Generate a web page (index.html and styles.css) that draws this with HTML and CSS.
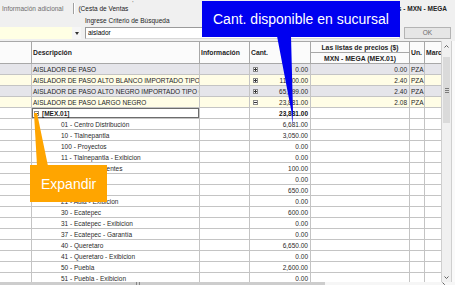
FILE: index.html
```html
<!DOCTYPE html>
<html lang="es">
<head>
<meta charset="utf-8">
<title>Cesta de Ventas</title>
<link rel="stylesheet" href="styles.css">
</head>
<body>
<div class="app">
  <div class="tabs">
    <span class="tab tab-off">Información adicional</span>
    <span class="tab-sep"></span>
    <span class="tab tab-on">(Cesta de Ventas</span>
    <span class="tick">'</span>
    <span class="pricelist">Lista de precios - MXN - MEGA</span>
  </div>
  <div class="search">
    <div class="combo">
      <span class="combo-val"></span>
      <span class="combo-btn"><svg width="4" height="3" viewBox="0 0 4 3"><path d="M0 0h4L2 3z" fill="#333"/></svg></span>
    </div>
    <div class="field">
      <div class="field-label">Ingrese Criterio de Búsqueda</div>
      <div class="field-row">
        <div class="input">aislador</div>
        <div class="btn">OK</div>
      </div>
    </div>
  </div>
  <div class="gridwrap">
    <div class="grid">
      <div class="ghead">
        <div class="h h-c0"></div>
        <div class="h h-desc">Descripción</div>
        <div class="h h-info">Información</div>
        <div class="h h-cant">Cant.</div>
        <div class="h h-pl1">Las listas de precios ($)</div>
        <div class="h h-pl2">MXN - MEGA (MEX.01)</div>
        <div class="h h-un">Un.</div>
        <div class="h h-marc">Marc</div>
      </div>

      <div class="row gray">
        <div></div><div class="desc">AISLADOR DE PASO</div><div></div>
        <div class="cant"><svg class="exp" width="5" height="5" viewBox="0 0 5 5"><rect x="0.5" y="0.5" width="4" height="4" fill="#fff" stroke="#8a8a8a"/><path d="M1 2.5h3M2.5 1v3" stroke="#333"/></svg><span>0.00</span></div>
        <div class="num">0.00</div><div class="un">PZA</div><div class="marc"></div>
      </div>
      <div class="row yel">
        <div></div><div class="desc">AISLADOR DE PASO ALTO BLANCO IMPORTADO TIPO CAMPANA</div><div></div>
        <div class="cant"><svg class="exp" width="5" height="5" viewBox="0 0 5 5"><rect x="0.5" y="0.5" width="4" height="4" fill="#fff" stroke="#8a8a8a"/><path d="M1 2.5h3M2.5 1v3" stroke="#333"/></svg><span>11,400.00</span></div>
        <div class="num">2.40</div><div class="un">PZA</div><div class="marc"></div>
      </div>
      <div class="row gray">
        <div></div><div class="desc">AISLADOR DE PASO ALTO NEGRO IMPORTADO TIPO CAMPANA</div><div></div>
        <div class="cant"><svg class="exp" width="5" height="5" viewBox="0 0 5 5"><rect x="0.5" y="0.5" width="4" height="4" fill="#fff" stroke="#8a8a8a"/><path d="M1 2.5h3M2.5 1v3" stroke="#333"/></svg><span>65,799.00</span></div>
        <div class="num">2.40</div><div class="un">PZA</div><div class="marc"></div>
      </div>
      <div class="row yel">
        <div></div><div class="desc">AISLADOR DE PASO LARGO NEGRO</div><div></div>
        <div class="cant"><svg class="exp" width="5" height="5" viewBox="0 0 5 5"><rect x="0.5" y="0.5" width="4" height="4" fill="#fff" stroke="#8a8a8a"/><path d="M1 2.5h3" stroke="#333"/></svg><span>23,881.00</span></div>
        <div class="num">2.08</div><div class="un">PZA</div><div class="marc"></div>
      </div>
      <div class="row group">
        <div></div>
        <div class="desc focus"><svg class="exp" width="5" height="5" viewBox="0 0 5 5"><rect x="0.5" y="0.5" width="4" height="4" fill="#fff" stroke="#8a8a8a"/><path d="M1 2.5h3" stroke="#333"/></svg><b>[MEX.01]</b></div>
        <div></div><div class="num bold">23,881.00</div><div></div><div></div><div class="marc"></div>
      </div>
      <div class="row child"><div></div><div class="desc">01 - Centro Distribución</div><div></div><div class="num">6,681.00</div><div></div><div></div><div class="marc"></div></div>
      <div class="row child"><div></div><div class="desc">10 - Tlalnepantla</div><div></div><div class="num">3,050.00</div><div></div><div></div><div class="marc"></div></div>
      <div class="row child"><div></div><div class="desc">100 - Proyectos</div><div></div><div class="num">0.00</div><div></div><div></div><div class="marc"></div></div>
      <div class="row child"><div></div><div class="desc">11 - Tlalnepantla - Exibicion</div><div></div><div class="num">0.00</div><div></div><div></div><div class="marc"></div></div>
      <div class="row child"><div></div><div class="desc">15 - Servicio Clientes</div><div></div><div class="num">100.00</div><div></div><div></div><div class="marc"></div></div>
      <div class="row child"><div></div><div class="desc">12 - Lerma</div><div></div><div class="num">0.00</div><div></div><div></div><div class="marc"></div></div>
      <div class="row child"><div></div><div class="desc">20 - Aula</div><div></div><div class="num">650.00</div><div></div><div></div><div class="marc"></div></div>
      <div class="row child"><div></div><div class="desc">21 - Aula - Exibicion</div><div></div><div class="num">0.00</div><div></div><div></div><div class="marc"></div></div>
      <div class="row child"><div></div><div class="desc">30 - Ecatepec</div><div></div><div class="num">600.00</div><div></div><div></div><div class="marc"></div></div>
      <div class="row child"><div></div><div class="desc">31 - Ecatepec - Exibicion</div><div></div><div class="num">0.00</div><div></div><div></div><div class="marc"></div></div>
      <div class="row child"><div></div><div class="desc">37 - Ecatepec - Garantía</div><div></div><div class="num">0.00</div><div></div><div></div><div class="marc"></div></div>
      <div class="row child"><div></div><div class="desc">40 - Queretaro</div><div></div><div class="num">6,650.00</div><div></div><div></div><div class="marc"></div></div>
      <div class="row child"><div></div><div class="desc">41 - Queretaro - Exibicion</div><div></div><div class="num">0.00</div><div></div><div></div><div class="marc"></div></div>
      <div class="row child"><div></div><div class="desc">50 - Puebla</div><div></div><div class="num">2,600.00</div><div></div><div></div><div class="marc"></div></div>
      <div class="row child"><div></div><div class="desc">51 - Puebla - Exibicion</div><div></div><div class="num">0.00</div><div></div><div></div><div class="marc"></div></div>
    </div>
    <div class="vscroll">
      <div class="sb-arrow"><svg width="5" height="3" viewBox="0 0 5 3"><path d="M0.5 2.5L2.5 0.5L4.5 2.5" fill="none" stroke="#606060"/></svg></div>
      <div class="sb-track">
        <div class="sb-thumb"><svg width="4" height="5" viewBox="0 0 4 5"><path d="M0 0.5h4M0 2.5h4M0 4.5h4" stroke="#7a7a7a"/></svg></div>
      </div>
      <div class="sb-arrow"><svg width="5" height="3" viewBox="0 0 5 3"><path d="M0.5 0.5L2.5 2.5L4.5 0.5" fill="none" stroke="#606060"/></svg></div>
    </div>
    <div class="edge"></div>
  </div>
  <div class="hscroll">
    <div class="hs-thumb"><span class="hs-grip"></span></div>
    <div class="hs-track"></div>
    <div class="hs-arrow"><svg width="3" height="5" viewBox="0 0 3 5"><path d="M0.5 0.5L2.5 2.5L0.5 4.5" fill="none" stroke="#606060"/></svg></div>
  </div>

  <div class="callout callout-blue">Cant. disponible en sucursal</div>
  <svg class="pointer" width="455" height="285" viewBox="0 0 455 285">
    <polygon points="277,36 291,36 293,112 292.3,125 291.5,112" fill="#0000f0"/>
    <polygon points="34,113 37,113 48,166 37,166" fill="#ffa500"/>
  </svg>
  <div class="callout callout-orange">Expandir</div>
</div>
</body>
</html>
```

FILE: styles.css
```css
* { box-sizing: border-box; margin: 0; padding: 0; }
html, body { width: 455px; height: 285px; overflow: hidden; }
body {
  font-family: "Liberation Sans", Arial, sans-serif;
  font-size: 6.5px;
  color: #1e1e1e;
  background: #f0f0f0;
}
.app { position: relative; width: 455px; height: 285px; overflow: hidden; }

/* tabs */
.tabs { height: 16px; display: flex; align-items: center; white-space: nowrap; }
.tab-off { margin-left: 2px; color: #6e6e6e; }
.tab-sep { width: 2px; height: 11px; margin-left: 10px; margin-right: 3px; border-left: 1px solid #a0a0a0; border-right: 1px solid #ffffff; }
.tab-on { color: #1a1a1a; }
.tick { align-self: flex-start; margin-left: 4px; margin-top: 0; color: #555; font-size: 6px; line-height: 6px; }
.pricelist { margin-left: auto; margin-right: 8px; font-weight: bold; color: #222; }

/* search */
.search { height: 25px; display: flex; align-items: flex-start; }
.combo { width: 81px; height: 12px; margin-top: 11px; display: flex; }
.combo-val { width: 72px; height: 12px; background: #ffffe4; }
.combo-btn { width: 9px; height: 12px; background: #f6f6f6; display: flex; align-items: center; justify-content: center; padding-left: 1px; }
.combo-btn svg { display: block; }
.field { margin-left: 4px; width: 366px; }
.field-label { height: 11px; padding-top: 1px; line-height: 8px; color: #1e1e1e; white-space: nowrap; }
.field-row { display: flex; height: 12px; }
.input { width: 315px; height: 12px; background: #fff; border: 1px solid #9a9a9a; border-right-color: #d8d8d8; border-bottom-color: #d8d8d8; padding-left: 2px; line-height: 10px; color: #000; }
.btn { width: 47px; height: 12px; margin-left: 4px; background: #e6e6e6; border: 1px solid #b4b4b4; text-align: center; line-height: 10px; color: #6a6a6a; }

/* grid */
.gridwrap { height: 241px; display: flex; background: #fff; }
.grid { width: 441px; height: 241px; overflow: hidden; background: #fff; }
.ghead {
  display: grid;
  grid-template-columns: 32px 168px 50px 61px 99px 15px 16px;
  grid-template-rows: 11px 11px;
  border-top: 1px solid #a8a8a8;
  background: #fbfbfb;
  font-size: 6.8px;
  font-weight: bold;
  color: #1e1e1e;
}
.h { border-right: 1px solid #a8a8a8; border-bottom: 1px solid #a8a8a8; display: flex; align-items: center; padding-left: 2px; white-space: nowrap; overflow: hidden; }
.h-c0 { grid-column: 1; grid-row: 1 / 3; }
.h-desc { grid-column: 2; grid-row: 1 / 3; padding-left: 1px; }
.h-info { grid-column: 3; grid-row: 1 / 3; padding-left: 1px; }
.h-cant { grid-column: 4; grid-row: 1 / 3; padding-left: 1px; }
.h-pl1 { grid-column: 5; grid-row: 1; justify-content: center; padding-left: 0; }
.h-pl2 { grid-column: 5; grid-row: 2; justify-content: center; padding-left: 0; }
.h-un { grid-column: 6; grid-row: 1 / 3; padding-left: 1px; }
.h-marc { grid-column: 7; grid-row: 1 / 3; border-right: none; padding-left: 1px; }

.row {
  display: grid;
  grid-template-columns: 32px 168px 50px 61px 99px 15px 16px;
  height: 11px;
}
.row > div {
  border-right: 1px solid #c4c4c4;
  border-bottom: 1px solid #c4c4c4;
  line-height: 11px;
  white-space: nowrap;
  overflow: hidden;
}
.row > .marc { border-right: none; }
.gray { background: #e5e5ea; }
.yel { background: #fffde6; }
.desc { padding-left: 1px; }
.child .desc { padding-left: 29px; color: #2a2a2a; }
.num { text-align: right; padding-right: 2px; color: #2a2a2a; }
.bold { font-weight: bold; color: #111; }
.un { padding-left: 1px; }
.cant { display: flex; align-items: center; justify-content: space-between; padding: 0 2px 0 3px; }
.cant span { line-height: 11px; }
.exp { display: block; flex: none; }
.focus { display: flex; align-items: center; padding-left: 2px !important; box-shadow: inset 0 0 0 1px #6c6c6c; }
.focus .exp { margin-right: 3px; }
.focus b { line-height: 11px; }

/* vertical scrollbar */
.vscroll { width: 11px; height: 241px; background: #f0f0f0; border-left: 1px solid #cfcfcf; border-right: 1px solid #cfcfcf; display: flex; flex-direction: column; }
.sb-arrow { height: 10px; display: flex; align-items: center; justify-content: center; }
.sb-arrow svg { display: block; }
.sb-track { flex: 1; padding-top: 6px; }
.sb-thumb { height: 66px; margin: 0 1px; background: #dadada; display: flex; align-items: center; justify-content: center; }
.sb-thumb svg { display: block; }
.edge { flex: 1; background: #fafafa; }

/* horizontal scrollbar */
.hscroll { height: 3px; display: flex; background: #f0f0f0; }
.hs-thumb { width: 325px; background: #cdcdcd; position: relative; }
.hs-grip { position: absolute; left: 136px; top: 0; width: 4px; height: 3px; border-left: 1px solid #888; border-right: 1px solid #888; }
.hs-track { flex: 1; background: #f6f6f6; }
.hs-arrow { width: 23px; display: flex; align-items: flex-start; padding-left: 10px; background: #f6f6f6; }

/* callouts */
.callout { position: absolute; color: #fff; font-size: 14px; white-space: nowrap; display: flex; align-items: center; }
.callout-blue { left: 202px; top: 1px; width: 198px; height: 36px; background: #0000f0; padding-left: 11px; }
.callout-orange { left: 30px; top: 165px; width: 77px; height: 37px; background: #ffa500; padding-left: 11px; }
.pointer { position: absolute; left: 0; top: 0; }
```
